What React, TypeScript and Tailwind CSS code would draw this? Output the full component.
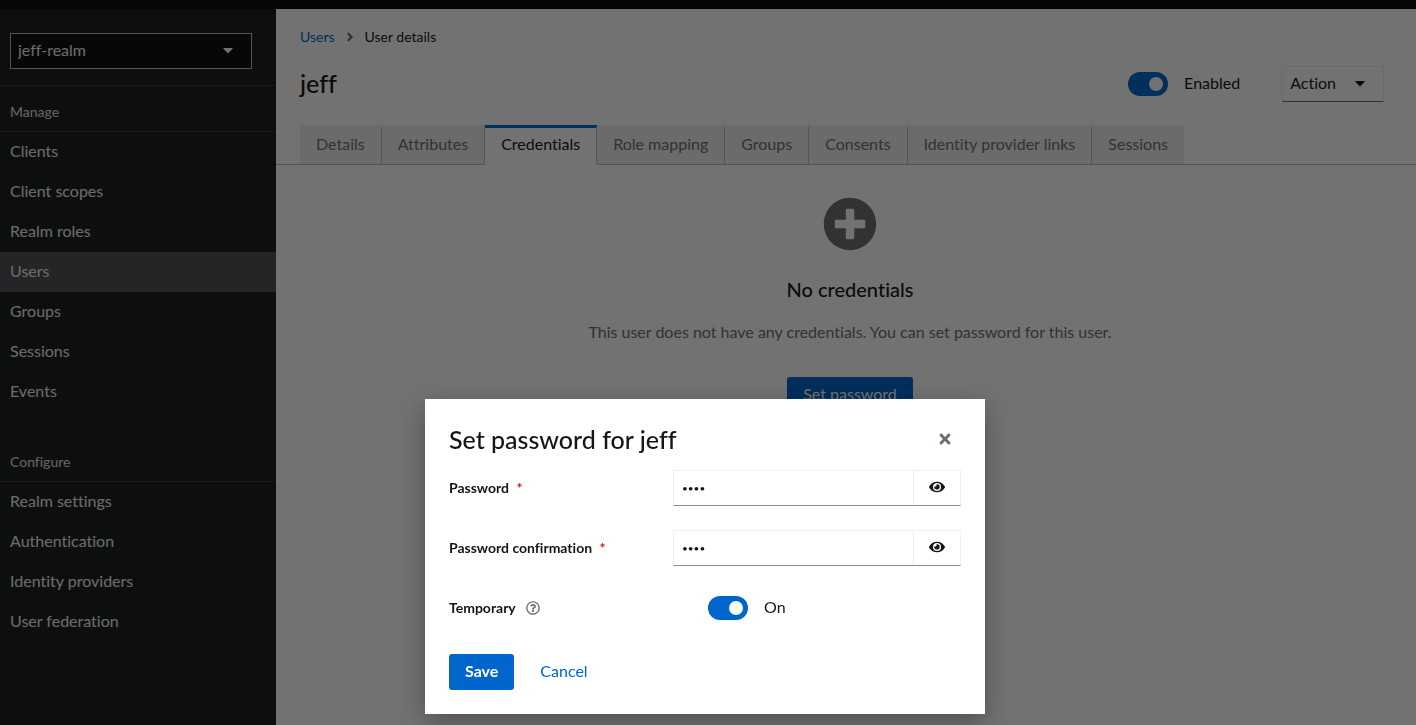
import { useState } from "react";
import {
  FaAngleRight,
  FaCaretDown,
  FaEye,
  FaPlusCircle,
  FaRegQuestionCircle,
  FaTimes,
} from "react-icons/fa";

const MANAGE = [
  "Clients",
  "Client scopes",
  "Realm roles",
  "Users",
  "Groups",
  "Sessions",
  "Events",
];

const CONFIGURE = [
  "Realm settings",
  "Authentication",
  "Identity providers",
  "User federation",
];

const TABS = [
  "Details",
  "Attributes",
  "Credentials",
  "Role mapping",
  "Groups",
  "Consents",
  "Identity provider links",
  "Sessions",
];

function Switch({ id, label }: { id: string; label: string }) {
  const [on, setOn] = useState(true);
  return (
    <span className="flex items-center gap-4">
      <input
        id={id}
        type="checkbox"
        role="switch"
        checked={on}
        onChange={(e) => setOn(e.target.checked)}
        className="relative h-6 w-10 appearance-none rounded-full bg-gray-500 checked:bg-[#0066cc] before:absolute before:top-[5px] before:left-[5px] before:size-[14px] before:rounded-full before:bg-white checked:before:left-[21px]"
      />
      <label htmlFor={id} className="pb-0.5">
        {label}
      </label>
    </span>
  );
}

function NavSection({ title, items }: { title: string; items: string[] }) {
  return (
    <section>
      <h2 className="border-b border-[#35383a] px-[10px] pt-4 pb-[9px] text-sm leading-5 text-[#e0e0e0]">
        {title}
      </h2>
      <ul>
        {items.map((item) => (
          <li key={item}>
            <a
              href="#"
              aria-current={item === "Users" ? "page" : undefined}
              className="block px-[10px] pt-[7px] pb-[9px] text-[#f0f0f0] aria-[current=page]:bg-[#504f53]"
            >
              {item}
            </a>
          </li>
        ))}
      </ul>
    </section>
  );
}

function Sidebar() {
  return (
    <nav className="w-[276px] shrink-0 bg-[#1b1f1e]">
      <div className="border-b border-[#35383a] px-[10px] pt-6 pb-4">
        <div className="relative w-[242px]">
          <select
            aria-label="Realm"
            defaultValue="jeff-realm"
            className="h-9 w-full appearance-none border border-[#b8bbbe] bg-[#0c0c0c] px-[7px] pb-0.5 text-[#f0f0f0]"
          >
            <option>jeff-realm</option>
          </select>
          <FaCaretDown className="pointer-events-none absolute top-[9px] right-4 text-white" />
        </div>
      </div>
      <div className="flex flex-col gap-6">
        <NavSection title="Manage" items={MANAGE} />
        <NavSection title="Configure" items={CONFIGURE} />
      </div>
    </nav>
  );
}

function UserDetails() {
  return (
    <main className="min-w-0 flex-1 bg-white">
      <nav aria-label="Breadcrumb" className="flex items-center gap-2 px-6 pt-[18px] text-sm leading-5">
        <a href="#" className="text-[#0066cc]">
          Users
        </a>
        <FaAngleRight className="size-[14px] text-[#6a6e73]" />
        <span>User details</span>
      </nav>

      <header className="flex items-center justify-between pt-[19px] pr-8 pb-[23px] pl-6">
        <h1 className="pb-0.5 text-[25px] leading-8 font-medium">jeff</h1>
        <div className="flex items-center gap-[42px]">
          <Switch id="user-enabled" label="Enabled" />
          <button
            type="button"
            className="flex h-9 items-center gap-4 border border-[#f0f0f0] border-b-[#6a6e73] px-[7px] pb-0.5"
          >
            Action
            <FaCaretDown className="mr-2" />
          </button>
        </div>
      </header>

      <div role="tablist" className="flex border-b border-[#b8bbbe] pl-6">
        {TABS.map((tab) => (
          <button
            key={tab}
            type="button"
            role="tab"
            aria-selected={tab === "Credentials"}
            className="-mb-px h-10 border-t-[3px] border-r border-b border-t-[#f0f0f0] border-r-[#b8bbbe] border-b-[#b8bbbe] bg-[#f0f0f0] px-4 pb-[5px] text-[#6a6e73] last:border-r-0 aria-selected:border-t-[#0066cc] aria-selected:border-b-white aria-selected:bg-white aria-selected:text-[#151515]"
          >
            {tab}
          </button>
        ))}
      </div>

      <div className="flex flex-col items-center pt-8 pr-4 pl-6 text-center">
        <FaPlusCircle className="size-[54px] text-[#6a6e73]" />
        <h2 className="mt-[23px] text-xl leading-[30px] font-medium">No credentials</h2>
        <p className="mt-4 text-[#6a6e73]">
          This user does not have any credentials. You can set password for this user.
        </p>
        <button type="button" className="mt-[33px] h-9 rounded-[3px] bg-[#0066cc] px-4 pb-0.5 text-white">
          Set password
        </button>
      </div>
    </main>
  );
}

function PasswordField({ id, label }: { id: string; label: string }) {
  const [value, setValue] = useState("jeff");
  const [visible, setVisible] = useState(false);
  return (
    <div className="grid grid-cols-[224px_1fr] items-center">
      <label htmlFor={id} className="text-sm font-bold">
        {label} <span className="ml-1 text-[#c9190b]">*</span>
      </label>
      <div className="flex h-9 border border-[#f0f0f0] border-b-[#8a8d90]">
        <input
          id={id}
          type={visible ? "text" : "password"}
          value={value}
          onChange={(e) => setValue(e.target.value)}
          className={`min-w-0 flex-1 px-2 outline-none ${visible ? "text-base" : "text-[10px]"}`}
        />
        <button
          type="button"
          aria-label="Show password"
          onClick={() => setVisible(!visible)}
          className="flex w-[47px] items-center justify-center border-l border-[#f0f0f0] pb-0.5"
        >
          <FaEye />
        </button>
      </div>
    </div>
  );
}

function SetPasswordModal() {
  return (
    <div className="fixed inset-0 flex items-end justify-center bg-[#030303]/56 pr-[6px] pb-[11px]">
      <form
        role="dialog"
        aria-labelledby="modal-title"
        className="w-[560px] bg-white p-6 shadow-[0_8px_24px_rgba(3,3,3,0.3)]"
      >
        <div className="flex items-center justify-between">
          <h2 id="modal-title" className="text-[25px] leading-8 font-medium">
            Set password for jeff
          </h2>
          <button type="button" aria-label="Close" className="px-2 text-[#6a6e73]">
            <FaTimes />
          </button>
        </div>
        <div className="mt-[15px] flex flex-col gap-6">
          <PasswordField id="password" label="Password" />
          <PasswordField id="password-confirmation" label="Password confirmation" />
          <div className="grid h-9 grid-cols-[259px_1fr] items-center">
            <span className="flex items-center gap-[10px] text-sm font-bold">
              Temporary
              <FaRegQuestionCircle className="text-[#6a6e73]" />
            </span>
            <Switch id="temporary" label="On" />
          </div>
        </div>
        <div className="mt-7 flex gap-[10px]">
          <button type="submit" className="h-9 rounded-[3px] bg-[#0066cc] px-4 pb-0.5 font-bold text-white">
            Save
          </button>
          <button type="button" className="h-9 px-4 pb-0.5 text-[#0066cc]">
            Cancel
          </button>
        </div>
      </form>
    </div>
  );
}

export default function App() {
  return (
    <div className="flex min-h-screen flex-col bg-white font-['Lato',sans-serif] text-base text-[#151515] [font-variant-ligatures:none]">
      <div className="h-[9px] bg-[#0a0a0a]" />
      <div className="flex flex-1">
        <Sidebar />
        <UserDetails />
      </div>
      <SetPasswordModal />
    </div>
  );
}
